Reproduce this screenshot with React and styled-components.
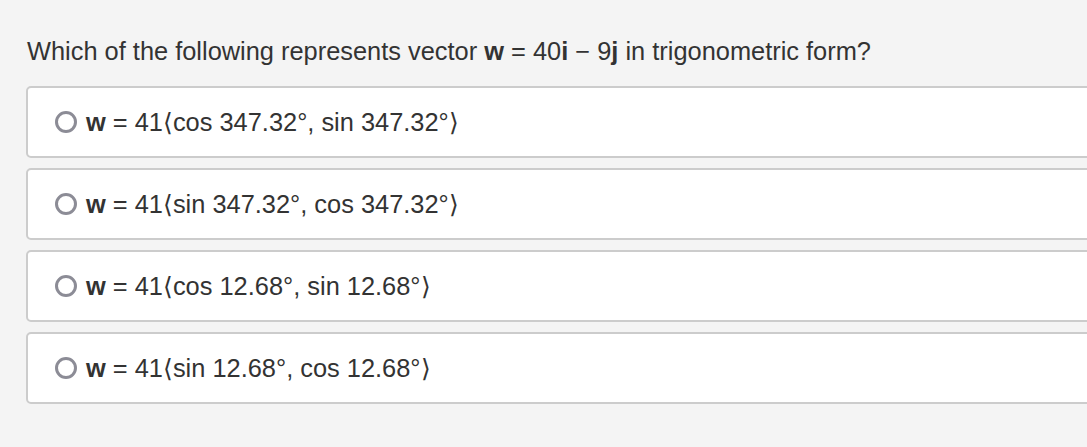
import React from "react";
import styled, { createGlobalStyle } from "styled-components";

const GlobalStyle = createGlobalStyle`
  html, body {
    margin: 0;
    padding: 0;
    background: #f4f4f4;
  }
  body {
    font-family: "Liberation Sans", Arial, sans-serif;
    color: #333333;
    overflow: hidden;
  }
`;

const Page = styled.div`
  width: 1087px;
  height: 447px;
  overflow: hidden;
  padding: 34px 0 0 26px;
  box-sizing: border-box;
`;

const Question = styled.div`
  font-size: 25.4px;
  line-height: 34px;
  padding-left: 1px;
  margin-bottom: 18px;
`;

const Options = styled.div`
  display: flex;
  flex-direction: column;
  gap: 10px;
  width: 1100px;
`;

const Card = styled.label`
  display: flex;
  align-items: center;
  gap: 9px;
  height: 72px;
  box-sizing: border-box;
  padding-left: 27px;
  background: #ffffff;
  border: 2px solid #cccccc;
  border-radius: 5px;
  font-size: 25.4px;
  cursor: pointer;
`;

const Radio = styled.span`
  width: 22px;
  height: 22px;
  box-sizing: border-box;
  border: 3px solid #8c8c96;
  border-radius: 50%;
  flex-shrink: 0;
`;

const Bold = styled.b`
  font-weight: 700;
`;

const options = [
  "41\u27E8cos 347.32°, sin 347.32°\u27E9",
  "41\u27E8sin 347.32°, cos 347.32°\u27E9",
  "41\u27E8cos 12.68°, sin 12.68°\u27E9",
  "41\u27E8sin 12.68°, cos 12.68°\u27E9",
];

export default function App() {
  return (
    <>
      <GlobalStyle />
      <Page>
        <Question>
          Which of the following represents vector <Bold>w</Bold> = 40<Bold>i</Bold> − 9<Bold>j</Bold> in trigonometric form?
        </Question>
        <Options>
          {options.map((o) => (
            <Card key={o}>
              <Radio />
              <span>
                <Bold>w</Bold> = {o}
              </span>
            </Card>
          ))}
        </Options>
      </Page>
    </>
  );
}
